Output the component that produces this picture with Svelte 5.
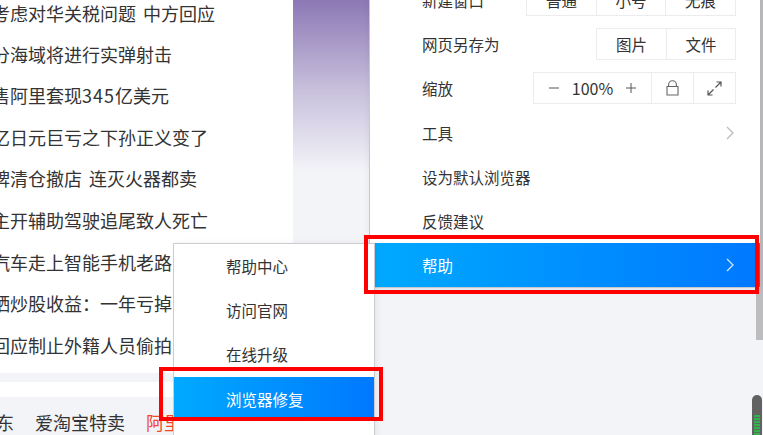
<script>
  const news = [
    "考虑对华关税问题 中方回应",
    "分海域将进行实弹射击",
    "售阿里套现<span class=\"num\">345</span>亿美元",
    "亿日元巨亏之下孙正义变了",
    "牌清仓撤店 连灭火器都卖",
    "主开辅助驾驶追尾致人死亡",
    "汽车走上智能手机老路",
    "晒炒股收益：一年亏掉",
    "回应制止外籍人员偷拍",
  ];
  const helpItems = ["帮助中心", "访问官网", "在线升级"];
</script>

<div class="page">
  <section class="feed">
    <ul class="news">
      {#each news as item}
        <li>{@html item}</li>
      {/each}
    </ul>
    <div class="band"></div>
    <div class="spacer"></div>
    <nav class="links">
      <span>东</span>
      <span>爱淘宝特卖</span>
      <span class="hot">阿里</span>
    </nav>
  </section>

  <aside class="side"></aside>

  <section class="right">
    <div class="track"></div>
    <div class="menu">
      <div class="row">
        <span>新建窗口</span>
        <div class="btns"><b class="cell">普通</b><b class="cell">小号</b><b class="cell wide">无痕</b></div>
      </div>
      <div class="row">
        <span>网页另存为</span>
        <div class="btns"><b class="cell">图片</b><b class="cell">文件</b></div>
      </div>
      <div class="row tall">
        <span>缩放</span>
        <div class="btns">
          <b class="zoom">
            <svg width="10" height="10" viewBox="0 0 10 10"><path d="M0 5h10" stroke="#555" fill="none" /></svg>
            <i>100%</i>
            <svg width="10" height="10" viewBox="0 0 10 10"><path d="M0 5h10M5 0v10" stroke="#555" fill="none" /></svg>
          </b>
          <b class="icon">
            <svg width="13" height="16" viewBox="0 0 13 16" fill="none" stroke="#666" stroke-width="1.1">
              <path d="M1 6.5h11v8.5H1z" />
              <path d="M2.6 6.5V4.6a3.9 3.9 0 0 1 7.8 0v1.9" />
            </svg>
          </b>
          <b class="icon">
            <svg width="15" height="15" viewBox="0 0 15 15" fill="none" stroke="#555" stroke-width="1.2">
              <path d="M8.5 6.5L14 1M9.5 1H14v4.5" />
              <path d="M6.5 8.5L1 14M1 9.5V14h4.5" />
            </svg>
          </b>
        </div>
      </div>
      <div class="row">
        <span>工具</span>
        <svg class="chev" width="9" height="14" viewBox="0 0 9 14"><path d="M1 1l6 6-6 6" fill="none" stroke="#bbb" stroke-width="1.3" /></svg>
      </div>
      <div class="row"><span>设为默认浏览器</span></div>
      <div class="row"><span>反馈建议</span></div>
      <div class="row active">
        <span>帮助</span>
        <svg class="chev" width="9" height="14" viewBox="0 0 9 14"><path d="M1 1l6 6-6 6" fill="none" stroke="#cfe6ff" stroke-width="1.3" /></svg>
      </div>
    </div>
    <div class="meter"></div>
  </section>

  <div class="submenu">
    {#each helpItems as item}
      <div class="sub-item">{item}</div>
    {/each}
    <div class="sub-item active">浏览器修复</div>
  </div>

  <div class="mark mark-help"></div>
  <div class="mark mark-repair"></div>
</div>

<style>
  :global(body) {
    margin: 0;
    background: #f3f4f8;
  }

  .page {
    position: relative;
    display: flex;
    width: 763px;
    height: 435px;
    overflow: hidden;
    font-family: "Noto Sans CJK SC", "Noto Sans", sans-serif;
    color: #333;
    background: #f3f4f8;
  }

  /* left page content, cut off by the window */
  .feed {
    display: flex;
    flex-direction: column;
    width: 293px;
    height: 435px;
    overflow: hidden;
    background: #f3f4f8;
  }
  .news {
    list-style: none;
    margin: -8px 0 0;
    padding: 0 0 7px;
    background: #fff;
  }
  .news li {
    height: 41.6px;
    line-height: 41.6px;
    margin-left: -8px;
    font-size: 18px;
    word-spacing: 3px;
    white-space: nowrap;
  }
  .news li:first-child {
    line-height: 43px;
  }
  .news :global(.num) {
    letter-spacing: 1px;
  }
  .band {
    height: 10px;
    background: #f3f4f8;
  }
  .spacer {
    height: 17px;
    background: #fff;
  }
  .links {
    display: flex;
    gap: 21px;
    margin-left: -4px;
    padding-top: 12px;
    font-size: 18px;
    line-height: 26px;
    white-space: nowrap;
  }
  .hot {
    color: #f4462a;
  }

  .side {
    width: 76px;
    height: 435px;
    border-right: 1px solid #cfcfd6;
    background: linear-gradient(#8c78b5 0, #c8c0dc 90px, #f3f4f8 172px);
  }

  /* browser menu */
  .right {
    position: relative;
    flex: 1;
  }
  .menu {
    position: relative;
    width: 390px;
    margin-top: -22px;
    background: #fff;
    box-shadow: 0 2px 8px rgba(0, 0, 0, 0.08);
    font-size: 15.5px;
  }
  .row {
    display: flex;
    align-items: center;
    justify-content: space-between;
    height: 44px;
    padding: 0 24px 0 52px;
    box-sizing: border-box;
  }
  .row.tall {
    height: 45px;
    padding-bottom: 1px;
  }
  .row.active {
    height: 45px;
    color: #fff;
    border-bottom: 1px solid #c8c8cc;
    background: linear-gradient(90deg, #00aaff, #0078ff);
  }
  .chev {
    margin-right: 1px;
  }
  .btns {
    display: flex;
    height: 32px;
    box-sizing: border-box;
    border: 1px solid #ececec;
  }
  .btns b {
    display: flex;
    align-items: center;
    justify-content: center;
    box-sizing: border-box;
    font-weight: 400;
    border-left: 1px solid #ececec;
  }
  .btns b:first-child {
    border-left: 0;
  }
  .cell {
    width: 69px;
  }
  .cell.wide {
    width: 70px;
  }
  .icon {
    width: 42px;
  }
  .zoom {
    width: 117px;
    gap: 13px;
  }
  .zoom i {
    font-style: normal;
    font-size: 16px;
  }

  .track {
    position: absolute;
    top: 0;
    right: 0;
    width: 7px;
    height: 340px;
    background: #bdbdc0;
  }
  .meter {
    position: absolute;
    top: 395px;
    right: 1px;
    width: 10px;
    height: 50px;
    border-radius: 5px 5px 0 0;
    background:
      repeating-linear-gradient(#2fb34a 0 2px, #5f6b60 2px 3px) 2px 20px / 6px 30px no-repeat,
      #626262;
  }

  /* help flyout */
  .submenu {
    position: absolute;
    left: 173px;
    top: 243px;
    width: 202px;
    height: 200px;
    box-sizing: border-box;
    background: #fff;
    border: 1px solid #cdcdd0;
    font-size: 15.5px;
    box-shadow: 2px 0 6px rgba(0, 0, 0, 0.06);
  }
  .sub-item {
    height: 44px;
    line-height: 44px;
    padding-left: 52px;
  }
  .sub-item.active {
    margin-top: 1px;
    color: #fff;
    background: linear-gradient(90deg, #00aaff, #0078ff);
  }

  /* red annotation frames */
  .mark {
    position: absolute;
    box-sizing: border-box;
    border: 4px solid #f00;
  }
  .mark-help {
    left: 364px;
    top: 235px;
    width: 395px;
    height: 59px;
  }
  .mark-repair {
    left: 159px;
    top: 367px;
    width: 224px;
    height: 54px;
  }
</style>
